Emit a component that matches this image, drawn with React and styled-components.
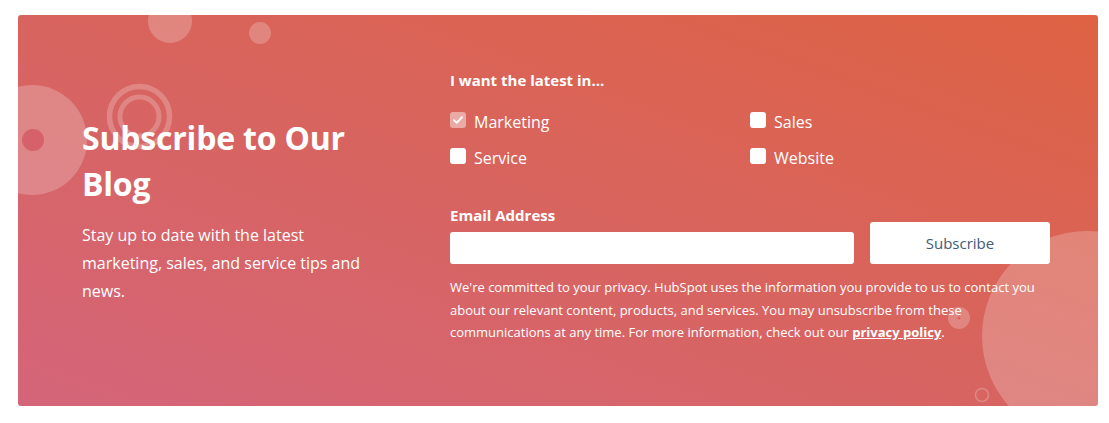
import React from "react";
import styled, { createGlobalStyle } from "styled-components";

const Global = createGlobalStyle`
  html, body { margin: 0; padding: 0; background: #fff; }
  body { font-family: "Open Sans", "Noto Sans", sans-serif; }
  * { box-sizing: border-box; }
`;

const Page = styled.div`
  padding: 15px 11px 17px 18px;
`;

const Card = styled.section`
  position: relative;
  overflow: hidden;
  width: 1080px;
  height: 391px;
  border-radius: 3px;
  background: linear-gradient(to top right, #d4657a 0%, #d8645f 50%, #de6243 100%);
  display: grid;
  grid-template-columns: 368px 600px;
  padding: 0 48px 0 64px;
  color: #fff;
`;

const Deco = styled.svg`
  position: absolute;
  inset: 0;
  pointer-events: none;
`;

const Left = styled.div`
  position: relative;
  display: flex;
  flex-direction: column;
  justify-content: center;
  padding-bottom: 2px;
`;

const Title = styled.h2`
  margin: 0 0 14px;
  font-size: 32px;
  line-height: 46px;
  font-weight: 700;
  letter-spacing: -0.2px;
`;

const Lead = styled.p`
  margin: 0;
  font-size: 16px;
  line-height: 28px;
  font-weight: 400;
  max-width: 300px;
`;

const Right = styled.div`
  position: relative;
  padding-top: 55px;
`;

const Legend = styled.div`
  font-size: 15px;
  font-weight: 700;
  line-height: 20px;
  margin-bottom: 21px;
`;

const Options = styled.div`
  display: grid;
  grid-template-columns: 300px 300px;
  row-gap: 14px;
  margin-bottom: 36px;
`;

const Option = styled.label`
  display: flex;
  align-items: center;
  gap: 8px;
  font-size: 16px;
  line-height: 22px;
`;

const Box = styled.span`
  width: 16px;
  height: 16px;
  border-radius: 3px;
  background: ${(p) => (p.$checked ? "rgba(255,255,255,0.45)" : "#fff")};
  display: inline-flex;
  align-items: center;
  justify-content: center;
  margin-top: -4px;
`;

const EmailRow = styled.div`
  display: grid;
  grid-template-columns: 404px 180px;
  column-gap: 16px;
  align-items: end;
  margin-bottom: 12px;
`;

const Field = styled.div`
  display: flex;
  flex-direction: column;
`;

const FieldLabel = styled.label`
  font-size: 15px;
  font-weight: 700;
  line-height: 20px;
  margin-bottom: 7px;
`;

const Input = styled.input`
  height: 32px;
  border: none;
  border-radius: 3px;
  background: #fff;
  outline: none;
`;

const Button = styled.button`
  height: 42px;
  border: none;
  border-radius: 3px;
  background: #fff;
  color: #425b76;
  font-family: inherit;
  font-size: 15px;
  font-weight: 400;
  cursor: pointer;
`;

const Legal = styled.p`
  margin: 0;
  font-size: 13px;
  line-height: 22.5px;
  max-width: 600px;
`;

const PolicyLink = styled.a`
  color: #fff;
  font-weight: 700;
  text-decoration: underline;
`;

const options = [
  { label: "Marketing", checked: true },
  { label: "Sales" },
  { label: "Service" },
  { label: "Website" },
];

export default function App() {
  return (
    <>
      <Global />
      <Page>
        <Card>
          <Deco width="1080" height="391" viewBox="0 0 1080 391">
            <g fill="#fff" fillOpacity="0.22">
              <circle cx="152" cy="6" r="22" />
              <circle cx="242" cy="18" r="11" />
              <circle cx="14" cy="125" r="55" />
              <circle cx="1069" cy="321" r="105" />
              <circle cx="941" cy="303" r="11" />
            </g>
            <circle cx="15" cy="125" r="11" fill="#d6616a" />
            <circle cx="941" cy="303" r="1.5" fill="#d8645e" />
            <g fill="none" stroke="#fff" strokeOpacity="0.22">
              <circle cx="121.5" cy="101.5" r="30" strokeWidth="5.5" />
              <circle cx="121.5" cy="101.5" r="19.5" strokeWidth="5" />
              <circle cx="964" cy="380" r="6.5" strokeWidth="1.6" />
            </g>
          </Deco>
          <Left>
            <Title>
              Subscribe to Our
              <br />
              Blog
            </Title>
            <Lead>
              Stay up to date with the latest marketing, sales, and service tips and news.
            </Lead>
          </Left>
          <Right>
            <Legend>I want the latest in...</Legend>
            <Options>
              {options.map((o) => (
                <Option key={o.label}>
                  <Box $checked={o.checked}>
                    {o.checked && (
                      <svg width="10" height="8" viewBox="0 0 10 8">
                        <path d="M1 4.2 3.7 6.8 9 1.2" fill="none" stroke="#fff" strokeWidth="1.8" strokeLinecap="round" strokeLinejoin="round" />
                      </svg>
                    )}
                  </Box>
                  {o.label}
                </Option>
              ))}
            </Options>
            <EmailRow>
              <Field>
                <FieldLabel>Email Address</FieldLabel>
                <Input type="email" />
              </Field>
              <Button>Subscribe</Button>
            </EmailRow>
            <Legal>
              We're committed to your privacy. HubSpot uses the information you provide to us to contact you
              about our relevant content, products, and services. You may unsubscribe from these
              communications at any time. For more information, check out our{" "}
              <PolicyLink href="#">privacy policy</PolicyLink>.
            </Legal>
          </Right>
        </Card>
      </Page>
    </>
  );
}
